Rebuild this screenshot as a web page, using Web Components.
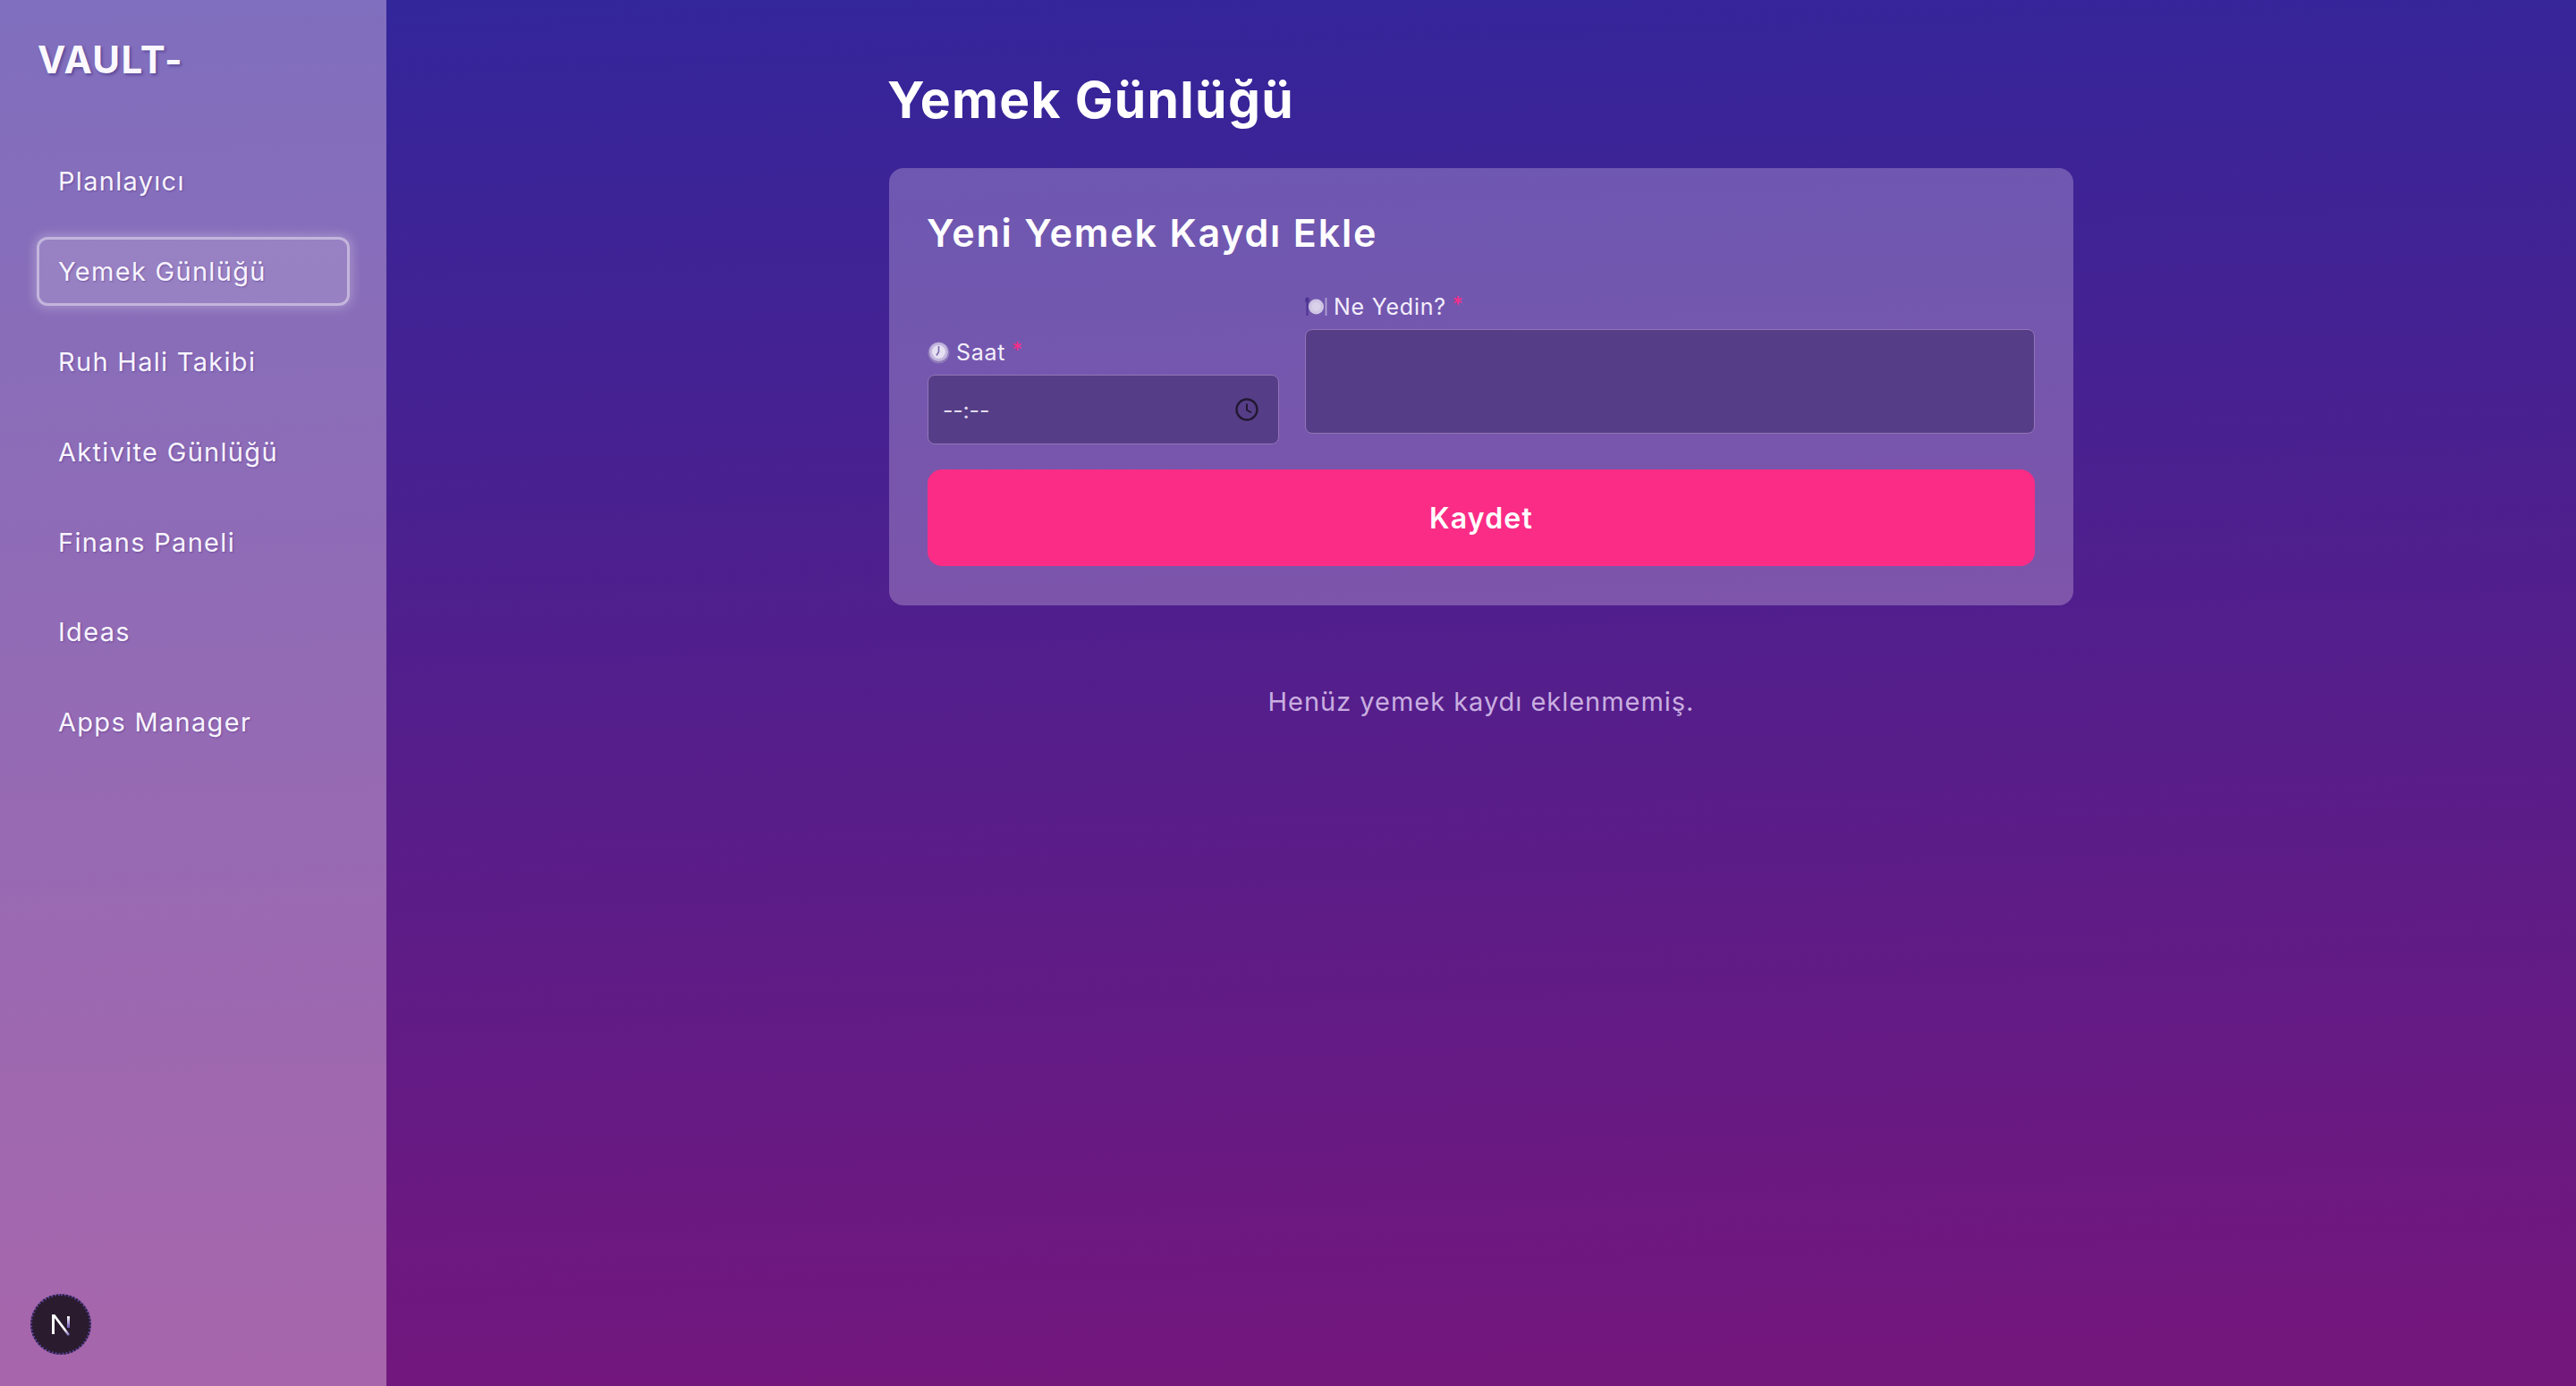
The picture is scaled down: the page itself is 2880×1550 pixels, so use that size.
<!DOCTYPE html>
<html lang="tr">
<head>
<meta charset="utf-8">
<title>Yemek Günlüğü</title>
<style>
  html, body { margin: 0; height: 100%; }
  body {
    background: linear-gradient(178deg, #32269b, #73177d 96%);
    color: #fff;
    font-family: Inter, "Noto Sans", sans-serif;
  }
</style>
</head>
<body>
<vault-app>
  <vault-sidebar slot="side" brand="VAULT-">
    <nav-item>Planlayıcı</nav-item>
    <nav-item active>Yemek Günlüğü</nav-item>
    <nav-item>Ruh Hali Takibi</nav-item>
    <nav-item>Aktivite Günlüğü</nav-item>
    <nav-item>Finans Paneli</nav-item>
    <nav-item>Ideas</nav-item>
    <nav-item>Apps Manager</nav-item>
  </vault-sidebar>
  <meal-page heading="Yemek Günlüğü" empty="Henüz yemek kaydı eklenmemiş.">
    <meal-form heading="Yeni Yemek Kaydı Ekle" action="Kaydet"></meal-form>
  </meal-page>
  <dev-badge></dev-badge>
</vault-app>
<script>
class VaultApp extends HTMLElement {
  constructor () {
    super()
    this.attachShadow({ mode: 'open' })
  }

  connectedCallback () {
    this.shadowRoot.innerHTML = `
      <style>
        :host { display: flex; height: 100vh; overflow: hidden; position: relative; }
      </style>
      <slot name="side"></slot>
      <slot></slot>
    `
  }
}

class VaultSidebar extends HTMLElement {
  constructor () {
    super()
    this.attachShadow({ mode: 'open' })
  }

  connectedCallback () {
    this.shadowRoot.innerHTML = `
      <style>
        :host {
          display: block;
          flex: 0 0 432px;
          box-sizing: border-box;
          padding: 43px 41px 0;
          background: rgba(255, 232, 248, .38);
        }
        .brand {
          margin: 0 0 73px 1px;
          font-size: 42px;
          line-height: 48px;
          font-weight: 700;
          letter-spacing: 1.4px;
          color: #fbf9ff;
          text-shadow: 2px 2px 3px rgba(50, 30, 110, .45);
        }
        nav { display: flex; flex-direction: column; gap: 23.9px; }
      </style>
      <div class="brand">${this.getAttribute('brand')}</div>
      <nav><slot></slot></nav>
    `
  }
}

class NavItem extends HTMLElement {
  constructor () {
    super()
    this.attachShadow({ mode: 'open' })
  }

  connectedCallback () {
    this.shadowRoot.innerHTML = `
      <style>
        :host {
          display: flex;
          align-items: center;
          box-sizing: border-box;
          height: 77px;
          padding: 0 21px;
          border: 3px solid transparent;
          border-radius: 12px;
          font-size: 29px;
          letter-spacing: 1.3px;
          color: #f8f4ff;
          text-shadow: 1px 1px 2px rgba(60, 30, 120, .4);
        }
        :host([active]) {
          border-color: rgba(255, 255, 255, .42);
          background: rgba(255, 255, 255, .14);
          box-shadow: 0 0 12px 3px rgba(255, 255, 255, .24);
        }
      </style>
      <slot></slot>
    `
  }
}

class MealPage extends HTMLElement {
  constructor () {
    super()
    this.attachShadow({ mode: 'open' })
  }

  connectedCallback () {
    this.shadowRoot.innerHTML = `
      <style>
        :host {
          display: block;
          flex: 1;
          padding-top: 74px;
        }
        .wrap { width: 1324px; margin: 0 auto; }
        h1 {
          margin: 0 0 38px -2px;
          font-size: 57px;
          line-height: 76px;
          font-weight: 700;
          letter-spacing: 1.3px;
        }
        p {
          margin: 90px 0 0;
          text-align: center;
          font-size: 29px;
          line-height: 36px;
          letter-spacing: .97px;
          color: #c9aee0;
        }
      </style>
      <div class="wrap">
        <h1>${this.getAttribute('heading')}</h1>
        <slot></slot>
        <p>${this.getAttribute('empty')}</p>
      </div>
    `
  }
}

class MealForm extends HTMLElement {
  constructor () {
    super()
    this.attachShadow({ mode: 'open' })
  }

  connectedCallback () {
    this.shadowRoot.innerHTML = `
      <style>
        :host {
          display: block;
          box-sizing: border-box;
          padding: 43px 43px 44px;
          border-radius: 16px;
          background: rgba(255, 240, 255, .26);
        }
        h2 {
          margin: 0 0 36px -1px;
          font-size: 43px;
          line-height: 58px;
          font-weight: 600;
          letter-spacing: 1.8px;
        }
        .fields {
          display: grid;
          grid-template-columns: 393px 1fr;
          column-gap: 29px;
          align-items: end;
        }
        button {
          display: block;
          width: 100%;
          height: 108px;
          margin-top: 28px;
          border: 0;
          border-radius: 16px;
          background: #fa2c86;
          color: #fff;
          font: 600 32px Inter, "Noto Sans", sans-serif;
          letter-spacing: 1.2px;
        }
      </style>
      <h2>${this.getAttribute('heading')}</h2>
      <div class="fields">
        <form-field label="Saat">
          <svg slot="icon" width="25" height="25" viewBox="0 0 25 25">
            <circle cx="12.5" cy="12.5" r="12" fill="#8f7aba"/>
            <circle cx="12.5" cy="11.5" r="10.5" fill="#c3b5de"/>
            <circle cx="12.5" cy="11.5" r="7.5" fill="#e6e0f2"/>
            <path d="M12.5 5v6.5l-2.5 4" fill="none" stroke="#7d67ad" stroke-width="1.6"/>
          </svg>
          <time-box></time-box>
        </form-field>
        <form-field label="Ne Yedin?">
          <svg slot="icon" width="25" height="22" viewBox="0 0 25 22">
            <ellipse cx="2.5" cy="3.5" rx="2.3" ry="3" fill="#4d3490"/>
            <path d="M2.5 6v15" fill="none" stroke="#4d3490" stroke-width="2"/>
            <circle cx="12.5" cy="11" r="8.5" fill="#cfc6e4"/>
            <circle cx="12.5" cy="11" r="5" fill="#d9d2ea"/>
            <path d="M23.5 1v20" fill="none" stroke="#b7a9d8" stroke-width="1.6"/>
          </svg>
          <note-box></note-box>
        </form-field>
      </div>
      <button type="button">${this.getAttribute('action')}</button>
    `
  }
}

class FormField extends HTMLElement {
  constructor () {
    super()
    this.attachShadow({ mode: 'open' })
  }

  connectedCallback () {
    this.shadowRoot.innerHTML = `
      <style>
        :host { display: block; }
        label {
          display: flex;
          align-items: center;
          gap: 7px;
          height: 36px;
          margin-bottom: 7px;
          font-size: 25px;
          letter-spacing: .75px;
          color: #f3eefb;
        }
        i { font-style: normal; color: #fa2c86; font-size: 24px; margin: -6px 0 0 0; }
        ::slotted(svg) { flex: none; }
      </style>
      <label><slot name="icon"></slot>${this.getAttribute('label')} <i>*</i></label>
      <slot></slot>
    `
  }
}

class TimeBox extends HTMLElement {
  constructor () {
    super()
    this.attachShadow({ mode: 'open' })
  }

  connectedCallback () {
    this.shadowRoot.innerHTML = `
      <style>
        :host {
          display: flex;
          align-items: center;
          justify-content: space-between;
          box-sizing: border-box;
          height: 78px;
          padding: 0 22px 0 16px;
          border: 1px solid #9474b8;
          border-radius: 8px;
          background: #553e87;
          font-size: 25px;
          letter-spacing: -.2px;
          color: #e3daf0;
        }
        span { padding-top: 2px; }
      </style>
      <span>--:--</span>
      <svg width="26" height="26" viewBox="0 0 26 26" fill="none" stroke="#221833" stroke-width="2.4">
        <circle cx="13" cy="13" r="11.5"/>
        <path d="M13 6.5v7l5 3" stroke-width="2"/>
      </svg>
    `
  }
}

class NoteBox extends HTMLElement {
  constructor () {
    super()
    this.attachShadow({ mode: 'open' })
  }

  connectedCallback () {
    this.shadowRoot.innerHTML = `
      <style>
        :host {
          display: block;
          box-sizing: border-box;
          height: 117px;
          margin-bottom: 12px;
          border: 1px solid #9474b8;
          border-radius: 8px;
          background: #553e87;
        }
      </style>
    `
  }
}

class DevBadge extends HTMLElement {
  constructor () {
    super()
    this.attachShadow({ mode: 'open' })
  }

  connectedCallback () {
    this.shadowRoot.innerHTML = `
      <style>
        :host {
          position: absolute;
          left: 34px;
          bottom: 35px;
          width: 68px;
          height: 68px;
          box-sizing: border-box;
          display: flex;
          align-items: center;
          justify-content: center;
          border: 2px dotted #5a429c;
          border-radius: 50%;
          background: #2a1b2e;
        }
      </style>
      <svg width="20" height="25" viewBox="0 0 20 25">
        <defs>
          <linearGradient id="bar" x1="0" y1="0" x2="0" y2="1">
            <stop offset="0" stop-color="#fff"/>
            <stop offset="1" stop-color="#6a50b0"/>
          </linearGradient>
          <linearGradient id="slant" x1="0" y1="0" x2="1" y2="1">
            <stop offset=".7" stop-color="#fff"/>
            <stop offset="1" stop-color="#6a50b0"/>
          </linearGradient>
        </defs>
        <path d="M0 1h3v22H0z" fill="#fff"/>
        <path d="M0 1h3.4L20 23.2 18 25z" fill="url(#slant)"/>
        <path d="M17 3h3v13h-3z" fill="url(#bar)"/>
      </svg>
    `
  }
}

customElements.define('vault-app', VaultApp)
customElements.define('vault-sidebar', VaultSidebar)
customElements.define('nav-item', NavItem)
customElements.define('meal-page', MealPage)
customElements.define('meal-form', MealForm)
customElements.define('form-field', FormField)
customElements.define('time-box', TimeBox)
customElements.define('note-box', NoteBox)
customElements.define('dev-badge', DevBadge)
</script>
</body>
</html>
